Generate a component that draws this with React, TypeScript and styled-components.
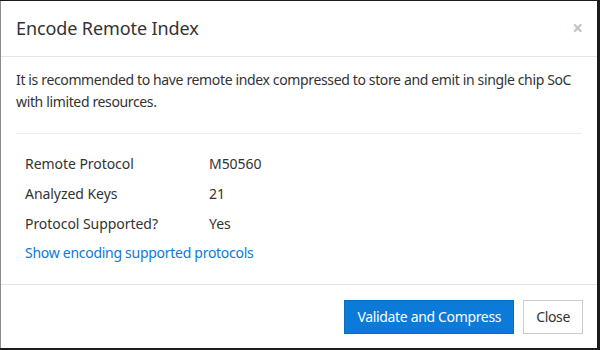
import React from 'react'
import styled, {createGlobalStyle} from 'styled-components'

const GlobalStyle = createGlobalStyle`
  html, body {
    margin: 0;
    padding: 0;
    background: #1c1c1c;
  }
  body {
    font-family: "Noto Sans", "Open Sans", sans-serif;
    font-size: 14px;
    color: #333333;
  }
`

const Page = styled.div`
  width: 600px;
  height: 350px;
  box-sizing: border-box;
  padding: 1px 3px 2px 0;
  background: #1c1c1c;
`

const Dialog = styled.div`
  height: 100%;
  display: flex;
  flex-direction: column;
  background: #ffffff;
  border-left: 1px solid #8c8c8c;
`

const Header = styled.header`
  display: flex;
  align-items: center;
  justify-content: space-between;
  padding: 15px 15px 15px 15px;
  border-bottom: 1px solid #e5e5e5;
`

const Title = styled.h4`
  margin: 0;
  font-size: 18px;
  font-weight: 400;
  line-height: 25px;
  letter-spacing: -0.1px;
  color: #333333;
`

const Dismiss = styled.button`
  border: 0;
  background: none;
  padding: 0;
  margin-right: -1px;
  font-family: inherit;
  font-size: 19px;
  font-weight: 700;
  line-height: 1;
  color: #c4c4c4;
  cursor: pointer;
`

const Body = styled.section`
  flex: 1;
  padding: 12px 15px 0 15px;
`

const Intro = styled.p`
  margin: 0 0 20px;
  line-height: 22px;
  letter-spacing: -0.36px;
`

const Divider = styled.hr`
  margin: 0 0 14px;
  border: 0;
  border-top: 1px solid #eeeeee;
`

const Facts = styled.dl`
  margin: 0;
  padding: 0 9px;
  display: grid;
  grid-template-columns: 184px 1fr;
  grid-auto-rows: 30px;
  align-items: center;
  letter-spacing: -0.05px;
`

const Term = styled.dt`
  margin: 0;
`

const Value = styled.dd`
  margin: 0;
`

const ProtocolsLink = styled.a`
  display: block;
  padding: 0 9px;
  line-height: 30px;
  letter-spacing: -0.28px;
  color: #0d7ad6;
  text-decoration: none;
`

const Footer = styled.footer`
  display: flex;
  justify-content: flex-end;
  gap: 9px;
  padding: 15px 14px 14px;
  border-top: 1px solid #e5e5e5;
`

const Button = styled.button<{$primary?: boolean}>`
  font-family: inherit;
  font-size: 14px;
  line-height: 20px;
  letter-spacing: -0.34px;
  padding: 6px 12px;
  border: 1px solid ${p => p.$primary ? '#0a6ebf' : '#cccccc'};
  border-radius: 0;
  background: ${p => p.$primary ? '#0b7ad8' : '#ffffff'};
  color: ${p => p.$primary ? '#ffffff' : '#333333'};
  cursor: pointer;
`

const facts = [
  {label: 'Remote Protocol', value: 'M50560'},
  {label: 'Analyzed Keys', value: '21'},
  {label: 'Protocol Supported?', value: 'Yes'},
]

export default function App() {
  return (
    <>
      <GlobalStyle/>
      <Page>
        <Dialog>
          <Header>
            <Title>Encode Remote Index</Title>
            <Dismiss aria-label="Close">×</Dismiss>
          </Header>
          <Body>
            <Intro>
              It is recommended to have remote index compressed to store and emit in single chip SoC with limited resources.
            </Intro>
            <Divider/>
            <Facts>
              {facts.map(item => (
                <React.Fragment key={item.label}>
                  <Term>{item.label}</Term>
                  <Value>{item.value}</Value>
                </React.Fragment>
              ))}
            </Facts>
            <ProtocolsLink href="#">Show encoding supported protocols</ProtocolsLink>
          </Body>
          <Footer>
            <Button $primary>Validate and Compress</Button>
            <Button>Close</Button>
          </Footer>
        </Dialog>
      </Page>
    </>
  )
}
